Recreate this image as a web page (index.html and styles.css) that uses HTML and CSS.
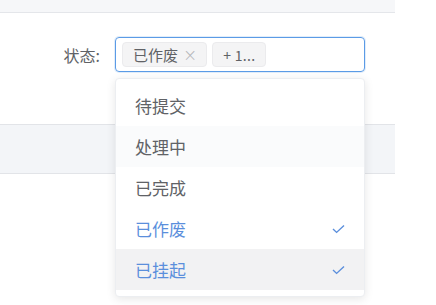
FILE: index.html
```html
<!DOCTYPE html>
<html>
<head>
<meta charset="utf-8">
<link rel="stylesheet" href="styles.css">
</head>
<body>
<div class="page">
  <div class="top-strip"></div>
  <div class="form-row">
    <label class="form-label">状态:</label>
    <div class="select">
      <span class="tag">已作废<span class="tag-close">×</span></span>
      <span class="tag tag-more">+ 1...</span>
    </div>
  </div>
  <div class="table-head"></div>
  <ul class="dropdown">
    <li class="option">待提交</li>
    <li class="option stripe">处理中</li>
    <li class="option">已完成</li>
    <li class="option selected">已作废<span class="check"><svg width="13" height="10" viewBox="0 0 13 10"><path d="M1 5 L4.6 8.4 L12 1.4" fill="none" stroke="#5b8fdc" stroke-width="1.4"/></svg></span></li>
    <li class="option selected hover">已挂起<span class="check"><svg width="13" height="10" viewBox="0 0 13 10"><path d="M1 5 L4.6 8.4 L12 1.4" fill="none" stroke="#5b8fdc" stroke-width="1.4"/></svg></span></li>
  </ul>
</div>
</body>
</html>
```

FILE: styles.css
```css
html, body {
  margin: 0;
  padding: 0;
  background: #ffffff;
  font-family: "Noto Sans CJK SC", "Noto Sans", sans-serif;
}
.page {
  position: relative;
  width: 436px;
  height: 305px;
  overflow: hidden;
}
.top-strip {
  width: 395px;
  height: 12px;
  background: #f6f7f9;
  border-bottom: 1px solid #e4e6ea;
}
.form-row {
  display: flex;
  align-items: center;
  margin-top: 24px;
  height: 35px;
}
.form-label {
  width: 115px;
  text-align: right;
  padding-right: 15px;
  box-sizing: border-box;
  font-size: 16px;
  color: #606266;
}
.select {
  box-sizing: border-box;
  width: 250px;
  height: 35px;
  border: 1px solid #5b9be6;
  border-radius: 4px;
  box-shadow: 0 0 0 1px rgba(91, 155, 230, 0.18);
  display: flex;
  align-items: center;
  gap: 5px;
  padding-left: 6px;
}
.tag {
  box-sizing: border-box;
  height: 25px;
  display: inline-flex;
  align-items: center;
  padding: 0 9px 0 10px;
  background: #f4f4f5;
  border: 1px solid #ebebed;
  border-radius: 4px;
  font-size: 15px;
  color: #606266;
}
.tag-more {
  padding: 0 10px 0 10px;
  font-size: 14px;
  letter-spacing: 0.3px;
}
.tag-close {
  margin-left: 5px;
  font-size: 17px;
  color: #b4b6ba;
  font-family: "DejaVu Sans", sans-serif;
  font-weight: 300;
}
.table-head {
  margin-top: 52px;
  width: 395px;
  height: 48px;
  background: #f3f5f8;
  border-top: 1px solid #e2e4e8;
  border-bottom: 1px solid #e2e4e8;
}
.dropdown {
  position: absolute;
  left: 115px;
  top: 78px;
  width: 250px;
  margin: 0;
  padding: 6px 0;
  list-style: none;
  background: #ffffff;
  border: 1px solid #eceef1;
  border-radius: 4px;
  box-sizing: border-box;
  box-shadow: 0 2px 10px rgba(0, 0, 0, 0.1);
}
.option {
  height: 41px;
  display: flex;
  align-items: center;
  justify-content: space-between;
  padding: 0 19px 0 19px;
  font-size: 17px;
  color: #606266;
}
.option.stripe {
  background: #fafbfc;
}
.option.selected {
  color: #5b8fdc;
}
.option.hover {
  background: #f2f2f3;
}
.check {
  display: flex;
  align-items: center;
}
```
